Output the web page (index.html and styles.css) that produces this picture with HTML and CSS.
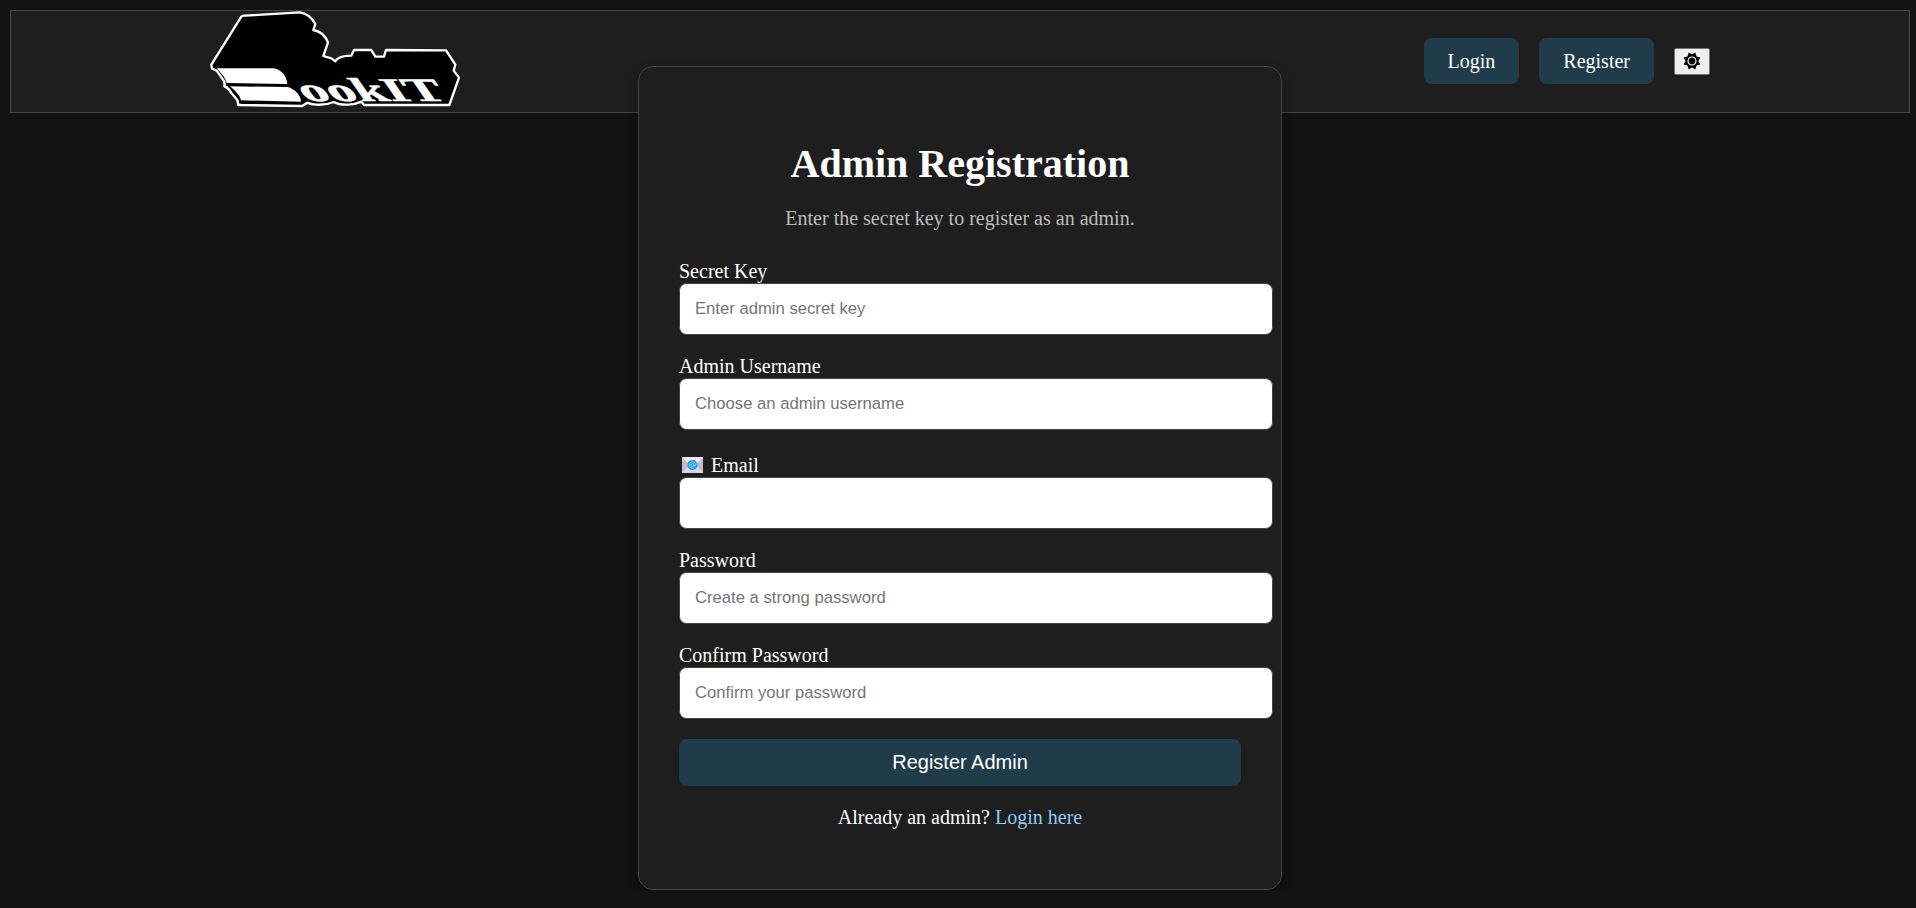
FILE: index.html
```html
<!DOCTYPE html>
<html lang="en">
<head>
<meta charset="utf-8">
<title>Admin Registration</title>
<link rel="stylesheet" href="styles.css">
</head>
<body>
<header class="site-header">
  <a class="logo" aria-label="BookIT">
    <svg width="250" height="97" viewBox="30 33 750 291">
      <path class="logo-body" d="M36 206 L34 194 L124 50 Q127 46 134 47 L300 37 Q330 42 346 72 L340 90 Q372 96 384 127 L370 168 L394 175 L406 184 Q416 167 454 167 L462 150 L514 150 L526 170 L552 170 L558 150 L738 151 L766 194 L761 212 L777 233 L748 315 L492 315 L484 305 Q462 315 440 314 Q414 314 402 306 Q376 316 348 314 Q332 313 322 308 L306 318 L115 315 L112 300 L94 279 Q88 266 74 259 L73 244 L50 212 Z"/>
      <path class="logo-page" d="M50 205 L220 205 C243 208 260 227 262 252 L80 249 C77 235 67 224 50 205 Z M90 259 L264 261 C286 269 302 284 303 305 L123 301 C119 287 109 275 90 259 Z"/>
      <path class="logo-line" d="M74 249 V260 L84 261 M114 301 V313 L126 315"/>
      <text class="logo-text" transform="translate(319 303) skewX(35) scale(1.66 1)" textLength="259" lengthAdjust="spacingAndGlyphs">ookIT</text>
    </svg>
  </a>
  <nav class="nav">
    <a class="nav-button">Login</a>
    <a class="nav-button">Register</a>
    <button class="theme-toggle" aria-label="Toggle theme">
      <svg width="18" height="18" viewBox="-9 -9 18 18">
        <path d="M-3.3-8.5 L0-6.4 L3.3-8.5 L4.4-4.5 L8.4-3.4 L6.3 0 L8.4 3.4 L4.4 4.5 L3.3 8.5 L0 6.4 L-3.3 8.5 L-4.4 4.5 L-8.4 3.4 L-6.3 0 L-8.4-3.4 L-4.4-4.5Z"/>
        <circle class="sun-ring" r="4"/>
      </svg>
    </button>
  </nav>
</header>
<main class="card">
  <h1 class="title">Admin Registration</h1>
  <p class="subtitle">Enter the secret key to register as an admin.</p>
  <form class="form">
    <div class="field"><label class="label">Secret Key</label><input class="input" type="text" placeholder="Enter admin secret key"></div>
    <div class="field"><label class="label">Admin Username</label><input class="input" type="text" placeholder="Choose an admin username"></div>
    <div class="field"><label class="label label-email">
      <svg class="mail" width="21" height="16" viewBox="0 0 21 16">
        <path fill="#dcd3e4" d="M0 0H21V16H0Z"/>
        <path fill="#c5bacf" d="M0 1V15L8 8ZM21 1V15L13 8Z"/>
        <path fill="#f3edf7" d="M0 0H21L10.5 10Z"/>
        <circle cx="10.5" cy="8" r="5" fill="#129fe6"/>
        <circle cx="10.4" cy="8" r="1.4" fill="none" stroke="#bce7ff" stroke-width=".6"/>
        <path fill="none" stroke="#bce7ff" stroke-width=".6" d="M12 6.4V8.6Q13.7 10 13.7 7.7A3.2 3.2 0 1 0 11.8 10.9"/>
      </svg>Email</label><input class="input" type="email"></div>
    <div class="field"><label class="label">Password</label><input class="input" type="password" placeholder="Create a strong password"></div>
    <div class="field"><label class="label">Confirm Password</label><input class="input" type="password" placeholder="Confirm your password"></div>
    <button class="submit" type="button">Register Admin</button>
  </form>
  <p class="footer">Already an admin? <a class="link">Login here</a></p>
</main>
</body>
</html>
```
FILE: styles.css
```css
body {
  margin: 10px 6px 0 10px;
  background: #121212;
  color: #fff;
  font: 20px/23px "Liberation Serif", "Times New Roman", serif;
}
.site-header {
  box-sizing: border-box;
  height: 103px;
  padding: 0 199px;
  border: 1px solid #444;
  background: #1e1e1e;
  display: flex;
  justify-content: space-between;
}
.logo { display: flex; align-items: flex-start; }
.logo-body { fill: #000; stroke: #fff; stroke-width: 7; stroke-linejoin: round; }
.logo-page { fill: #fff; }
.logo-line { fill: none; stroke: #fff; stroke-width: 6; }
.logo-text { fill: #fff; stroke: #fff; stroke-width: 1.5; font: bold 99px "Liberation Serif", serif; }
.nav { display: flex; align-items: center; gap: 20px; }
.nav-button {
  box-sizing: border-box;
  height: 46px;
  margin-bottom: 1px;
  padding: 12px 24px 11px;
  border-radius: 7.5px;
  background: #203c4a;
}
.theme-toggle {
  box-sizing: border-box;
  width: 36px;
  height: 27px;
  padding: 0 0 1px;
  border: 1px solid #767676;
  border-radius: 2px;
  background: #efefef;
  display: flex;
  align-items: center;
  justify-content: center;
}
.sun-ring { fill: #000; stroke: #efefef; stroke-width: 1.2; }
.card {
  position: relative;
  box-sizing: border-box;
  width: 644px;
  height: 824px;
  margin: -47px auto 0;
  padding: 71px 40px 0;
  border: 1px solid #444;
  border-radius: 15px;
  background: #1e1e1e;
  box-shadow: 0 5px 12px rgba(0, 0, 0, .3);
}
.title { margin: 0; font-size: 40px; line-height: 52px; text-align: center; }
.subtitle { margin: 17px 0 30px; color: #bbb; text-align: center; }
.form { display: flex; flex-direction: column; }
.field { margin-bottom: 20px; }
.label { display: block; height: 23px; }
.label-email { display: flex; align-items: center; height: 27px; padding: 4px 0 0 3px; box-sizing: border-box; }
.mail { margin: 0 8px 1px 0; }
.input {
  display: block;
  width: 100%;
  height: 50px;
  padding: 0 15px;
  border: 1px solid #444;
  border-radius: 7.5px;
  background: #fff;
  font: 16.67px "Liberation Sans", Arial, sans-serif;
}
.input::placeholder { color: #757575; }
.submit {
  height: 47px;
  padding: 0;
  border: 0;
  border-radius: 7.5px;
  background: #203c4a;
  color: #fff;
  font: 20px "Liberation Sans", Arial, sans-serif;
}
.footer { margin: 20px 0 0; text-align: center; }
.link { color: #90caf9; }
```
